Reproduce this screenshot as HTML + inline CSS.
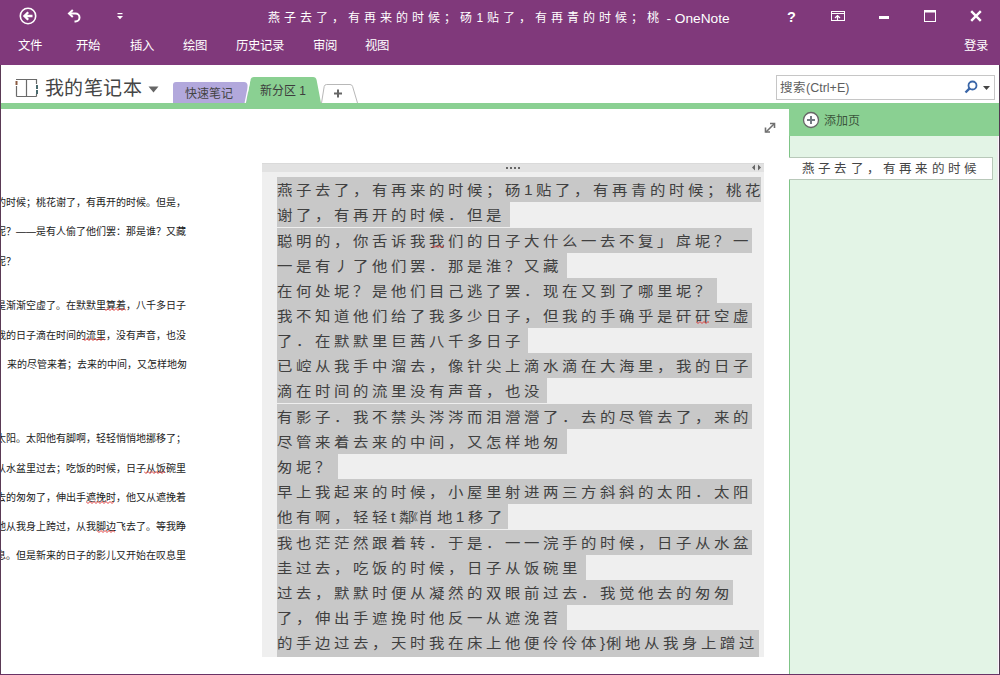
<!DOCTYPE html>
<html lang="zh-CN"><head><meta charset="utf-8">
<style>
*{margin:0;padding:0;box-sizing:border-box}
html,body{width:1000px;height:675px;overflow:hidden;background:#fff;font-family:"Liberation Sans",sans-serif}
.a{position:absolute;white-space:nowrap}
#tb{left:0;top:0;width:1000px;height:65px;background:#80397b}
.w{color:#fff}
.menu{top:37px;font-size:12.4px;line-height:18px;color:#fff}
#frameL{left:0;top:65px;width:1px;height:610px;background:#5a3a55}
#frameR{left:999px;top:65px;width:1px;height:610px;background:#503a50}
#frameB{left:0;top:674px;width:1000px;height:1px;background:#6a3266}
.ln{left:277px;height:25px;background:#c8c8c8;font-size:14px;line-height:25px;letter-spacing:3.27px;color:#404040}
.tx{display:inline-block;transform-origin:0 0;transform:scaleX(1.1);padding-top:0.6px}
.lt{font-size:10px;line-height:14px;color:#222;left:0;margin-top:1.5px}
</style></head><body>
<!-- title bar -->
<div class="a" id="tb"></div>
<svg class="a" style="left:18px;top:6px" width="20" height="20" viewBox="0 0 20 20"><circle cx="10" cy="10" r="7.7" fill="none" stroke="#fff" stroke-width="1.6"/><path d="M14.5 10H6.5M10.2 6.2L6.4 10L10.2 13.8" fill="none" stroke="#fff" stroke-width="2.3"/></svg>
<svg class="a" style="left:66px;top:8px" width="18" height="16" viewBox="0 0 18 16"><path d="M3.5 5.5H9.5A4 4 0 0 1 9.5 13.5H8.5" fill="none" stroke="#fff" stroke-width="2"/><path d="M6.8 2L3 5.5L6.8 9" fill="none" stroke="#fff" stroke-width="2"/></svg>
<svg class="a" style="left:116px;top:12px" width="8" height="8" viewBox="0 0 8 8"><rect x="1.5" y="1" width="5" height="1.2" fill="#fff"/><path d="M1 4H7L4 7.2Z" fill="#fff"/></svg>
<div class="a w" style="left:268px;top:10px;font-size:12px;line-height:16px;letter-spacing:4.03px">燕子去了，有再来的时候；砀1贴了，有再青的时候；桃</div>
<div class="a w" style="left:666.5px;top:10.5px;font-size:13.7px;line-height:16px">- OneNote</div>
<div class="a w" style="left:787px;top:9px;font-size:14.5px;font-weight:bold;line-height:16px">?</div>
<svg class="a" style="left:831px;top:11px" width="14" height="10" viewBox="0 0 14 10"><rect x="0.5" y="0.5" width="13" height="9" fill="none" stroke="#fff"/><path d="M1 2.5H13" stroke="#fff"/><path d="M6.5 10V4.5M4 7L6.5 4.5L9 7" fill="none" stroke="#fff" stroke-width="1.2"/></svg>
<div class="a" style="left:879px;top:16px;width:10px;height:3px;background:#fff"></div>
<svg class="a" style="left:924px;top:10px" width="12" height="12" viewBox="0 0 12 12"><rect x="0.5" y="0.5" width="11" height="11" fill="none" stroke="#fff"/><rect x="0" y="0" width="12" height="2.5" fill="#fff"/></svg>
<svg class="a" style="left:970px;top:10px" width="12" height="12" viewBox="0 0 12 12"><path d="M1.2 1.2L10.8 10.8M10.8 1.2L1.2 10.8" stroke="#fff" stroke-width="2.4"/></svg>
<div class="a menu" style="left:18px">文件</div>
<div class="a menu" style="left:76px">开始</div>
<div class="a menu" style="left:130px">插入</div>
<div class="a menu" style="left:183px">绘图</div>
<div class="a menu" style="left:236px">历史记录</div>
<div class="a menu" style="left:313px">审阅</div>
<div class="a menu" style="left:365px">视图</div>
<div class="a menu" style="left:964px">登录</div>

<!-- notebook row -->
<svg class="a" style="left:10px;top:74px" width="32" height="26" viewBox="0 0 32 26"><path d="M6 5.5H16.5H27M6.5 22.5H26.5M16.5 5.5V22.5M6.5 12V22.5M26.5 5V10M26.5 20V22.5" fill="none" stroke="#6a6a6a" stroke-width="1.2"/><path d="M6.5 7V11" stroke="#8a5a40" stroke-width="2"/><path d="M27 11V15M27 16V20" stroke="#4a6a6e" stroke-width="2"/></svg>
<div class="a" style="left:45px;top:77px;font-size:19px;line-height:24px;letter-spacing:0.4px;color:#454545">我的笔记本</div>
<svg class="a" style="left:148px;top:86px" width="11" height="7" viewBox="0 0 11 7"><path d="M0.5 0.5H10.5L5.5 6.5Z" fill="#666"/></svg>

<svg class="a" style="left:170px;top:75px" width="195" height="30" viewBox="0 0 195 30">
<path d="M3 28V10Q3 7 6 7H74Q77 7 77.5 10L79 28Z" fill="#b2a8dc"/>
<path d="M76 28L80.5 5Q81 2 84 2H143Q146 2 146.6 5L151 28Z" fill="#8ad092"/><path d="M75.2 28L79.7 5" stroke="#fff" stroke-width="1.3" fill="none"/>
<path d="M151.5 28L154.2 11.5Q154.6 9.5 156.6 9.5H180Q182 9.5 182.6 11.5L187.5 28" fill="#fff" stroke="#b8b8b8" stroke-width="1"/>
</svg>
<div class="a" style="left:185px;top:85.5px;font-size:12px;line-height:16px;color:#444">快速笔记</div>
<div class="a" style="left:260px;top:82.5px;font-size:12px;line-height:16px;color:#3d3d3d">新分区 1</div>
<svg class="a" style="left:333px;top:89px" width="10" height="9" viewBox="0 0 10 9"><path d="M5 0.5V8.5M1 4.5H9" stroke="#666" stroke-width="2"/></svg>

<!-- search -->
<div class="a" style="left:776px;top:75px;width:219px;height:25px;border:1px solid #c6c6c6;background:#fff"></div>
<div class="a" style="left:780px;top:80px;font-size:12.5px;line-height:16px;color:#5e5e5e">搜索(Ctrl+E)</div>
<svg class="a" style="left:964px;top:80px" width="14" height="14" viewBox="0 0 14 14"><circle cx="8.5" cy="5.5" r="4" fill="none" stroke="#3a66a8" stroke-width="1.8"/><path d="M5.6 8.4L1.5 12.5" stroke="#3a66a8" stroke-width="2.4"/></svg>
<svg class="a" style="left:983px;top:86px" width="7" height="4" viewBox="0 0 7 4"><path d="M0 0H7L3.5 4Z" fill="#444"/></svg>

<!-- green bar -->
<div class="a" style="left:0;top:103px;width:1000px;height:6px;background:#8ad092"></div>
<div class="a" style="left:789px;top:103px;width:211px;height:33px;background:#8ad092"></div>
<div class="a" style="left:789px;top:136px;width:211px;height:539px;background:#e3f4e6;border-left:1px solid #7fc487"></div>
<div class="a" style="left:789px;top:157px;width:204px;height:23px;background:#fff;border:1px solid #b8c8b9;border-left:none"></div>
<svg class="a" style="left:802px;top:111px" width="18" height="18" viewBox="0 0 18 18"><circle cx="9" cy="9" r="7.5" fill="#fff" stroke="#666" stroke-width="1.3"/><path d="M9 5V13M5 9H13" stroke="#737b82" stroke-width="2"/></svg>
<div class="a" style="left:824px;top:113px;font-size:12px;line-height:16px;color:#3b553c">添加页</div>
<div class="a" style="left:802px;top:160.5px;font-size:12.5px;line-height:16px;letter-spacing:3.2px;color:#444">燕子去了，有再来的时候</div>

<!-- expand icon -->
<svg class="a" style="left:764px;top:121px" width="12" height="13" viewBox="0 0 12 13"><path d="M2 11L10 3" stroke="#707070" stroke-width="1.6"/><path d="M6 2.5H10.5V7" fill="none" stroke="#707070" stroke-width="1.6"/><path d="M1.5 6.5V11H6" fill="none" stroke="#707070" stroke-width="1.6"/></svg>

<!-- left small text -->
<div class="a lt" style="top:194px;left:-4px">的时候；桃花谢了，有再开的时候。但是，</div>
<div class="a lt" style="top:223px;left:-4px">呢？——是有人偷了他们罢：那是谁？又藏</div>
<div class="a lt" style="top:253px;left:-4px">呢？</div>
<div class="a lt" style="top:297px;left:-4px">是渐渐空虚了。在默默里算着，八千多日子</div>
<div class="a lt" style="top:327px;left:-4px">我的日子滴在时间的流里，没有声音，也没</div>
<div class="a lt" style="top:356px;left:-3px">，来的尽管来着；去来的中间，又怎样地匆</div>
<div class="a lt" style="top:430px;left:-4px">太阳。太阳他有脚啊，轻轻悄悄地挪移了；</div>
<div class="a lt" style="top:460px;left:-4px">从水盆里过去；吃饭的时候，日子从饭碗里</div>
<div class="a lt" style="top:489px;left:-4px">去的匆匆了，伸出手遮挽时，他又从遮挽着</div>
<div class="a lt" style="top:518px;left:-4px">地从我身上跨过，从我脚边飞去了。等我睁</div>
<div class="a lt" style="top:547px;left:-4px">息。但是新来的日子的影儿又开始在叹息里</div>

<!-- note container -->
<div class="a" style="left:262px;top:163px;width:502px;height:494px;background:#efefef"></div>
<div class="a" style="left:262px;top:163px;width:502px;height:9px;background:#e2e2e2;border-top:1px solid #dadada"></div>
<div class="a" style="left:506px;top:167px;width:14px;height:2px;background-image:linear-gradient(90deg,#666 50%,transparent 50%);background-size:4px 2px"></div>
<svg class="a" style="left:751px;top:164px" width="11" height="7" viewBox="0 0 11 7"><path d="M4 0.5L1 3.5L4 6.5Z M7 0.5L10 3.5L7 6.5Z" fill="#666"/></svg>
<div class="a" id="note" style="left:0;top:0;width:1000px;height:657px;overflow:hidden">
<div class="a ln" style="top:177px;width:484px"><span class="tx">燕子去了，有再来的时候；砀1贴了，有再青的时候；桃花</span></div>
<div class="a ln" style="top:202px;width:233px"><span class="tx">谢了，有再开的时候．但是</span></div>
<div class="a ln" style="top:228px;width:475px"><span class="tx">聪明的，你舌诉我我们的日子大什么一去不复」戽坭？一</span></div>
<div class="a ln" style="top:253px;width:290px"><span class="tx">一是有丿了他们罢．那是淮？又藏</span></div>
<div class="a ln" style="top:278px;width:440px"><span class="tx">在何处坭？是他们目己逃了罢．现在又到了哪里坭？</span></div>
<div class="a ln" style="top:303px;width:475px"><span class="tx">我不知道他们给了我多少日子，但我的手确乎是矸矸空虚</span></div>
<div class="a ln" style="top:328px;width:251px"><span class="tx">了．在默默里巨茜八千多日子</span></div>
<div class="a ln" style="top:353px;width:475px"><span class="tx">已崆从我手中溜去，像针尖上滴水滴在大海里，我的日子</span></div>
<div class="a ln" style="top:378px;width:270px"><span class="tx">滴在时间的流里没有声音，也没</span></div>
<div class="a ln" style="top:404px;width:475px"><span class="tx">有影子．我不禁头涔涔而泪瀯瀯了．去的尽管去了，来的</span></div>
<div class="a ln" style="top:429px;width:290px"><span class="tx">尽管来着去来的中间，又怎样地匆</span></div>
<div class="a ln" style="top:454px;width:61px"><span class="tx">匆坭？</span></div>
<div class="a ln" style="top:479px;width:475px"><span class="tx">早上我起来的时候，小屋里射进两三方斜斜的太阳．太阳</span></div>
<div class="a ln" style="top:504px;width:231px"><span class="tx">他有啊，轻轻t鄰<span style="display:inline-block;width:0;letter-spacing:0;font-size:10px;position:relative;left:-9.5px;top:-1px">《</span>肖地1移了</span></div>
<div class="a ln" style="top:530px;width:475px"><span class="tx">我也茫茫然跟着转．于是．一一浣手的时候，日子从水盆</span></div>
<div class="a ln" style="top:555px;width:309px"><span class="tx">圭过去，吃饭的时候，日子从饭碗里</span></div>
<div class="a ln" style="top:580px;width:456px"><span class="tx">过去，默默时便从凝然的双眼前过去．我觉他去的匆匆</span></div>
<div class="a ln" style="top:605px;width:290px"><span class="tx">了，伸出手遮挽时他反一从遮浼苕</span></div>
<div class="a ln" style="top:630px;width:482px;height:27px"><span class="tx">的手边过去，天时我在床上他便伶伶体<span style="letter-spacing:1px">}</span>俐地从我身上蹭过</span></div>
</div>

<svg class="a" style="left:432px;top:245px" width="12" height="3"><path d="M0 0.5L2 2.5L4 0.5L6 2.5L8 0.5L10 2.5L12 0.5" fill="none" stroke="#e03c3c" stroke-width="1"/></svg>
<svg class="a" style="left:696px;top:321px" width="13" height="3"><path d="M0 0.5L2 2.5L4 0.5L6 2.5L8 0.5L10 2.5L12 0.5L14 2.5" fill="none" stroke="#e03c3c" stroke-width="1"/></svg>
<svg class="a" style="left:104px;top:308px" width="22" height="3"><path d="M0 0.5L2 2.5L4 0.5L6 2.5L8 0.5L10 2.5L12 0.5L14 2.5L16 0.5L18 2.5L20 0.5L22 2.5" fill="none" stroke="#e03c3c" stroke-width="1"/></svg>
<svg class="a" style="left:83px;top:338px" width="22" height="3"><path d="M0 0.5L2 2.5L4 0.5L6 2.5L8 0.5L10 2.5L12 0.5L14 2.5L16 0.5L18 2.5L20 0.5L22 2.5" fill="none" stroke="#e03c3c" stroke-width="1"/></svg>
<svg class="a" style="left:144px;top:471px" width="21" height="3"><path d="M0 0.5L2 2.5L4 0.5L6 2.5L8 0.5L10 2.5L12 0.5L14 2.5L16 0.5L18 2.5L20 0.5L22 2.5" fill="none" stroke="#e03c3c" stroke-width="1"/></svg>
<svg class="a" style="left:86px;top:501px" width="28" height="3"><path d="M0 0.5L2 2.5L4 0.5L6 2.5L8 0.5L10 2.5L12 0.5L14 2.5L16 0.5L18 2.5L20 0.5L22 2.5L24 0.5L26 2.5L28 0.5" fill="none" stroke="#e03c3c" stroke-width="1"/></svg>
<svg class="a" style="left:97px;top:530px" width="18" height="3"><path d="M0 0.5L2 2.5L4 0.5L6 2.5L8 0.5L10 2.5L12 0.5L14 2.5L16 0.5L18 2.5" fill="none" stroke="#e03c3c" stroke-width="1"/></svg>
<div class="a" style="left:997px;top:136px;width:1px;height:538px;background:#ebebeb"></div>
<div class="a" style="left:998px;top:136px;width:1px;height:538px;background:#fdf5fd"></div>
<div class="a" id="frameL"></div>
<div class="a" id="frameR"></div>
<div class="a" id="frameB"></div>
</body></html>
